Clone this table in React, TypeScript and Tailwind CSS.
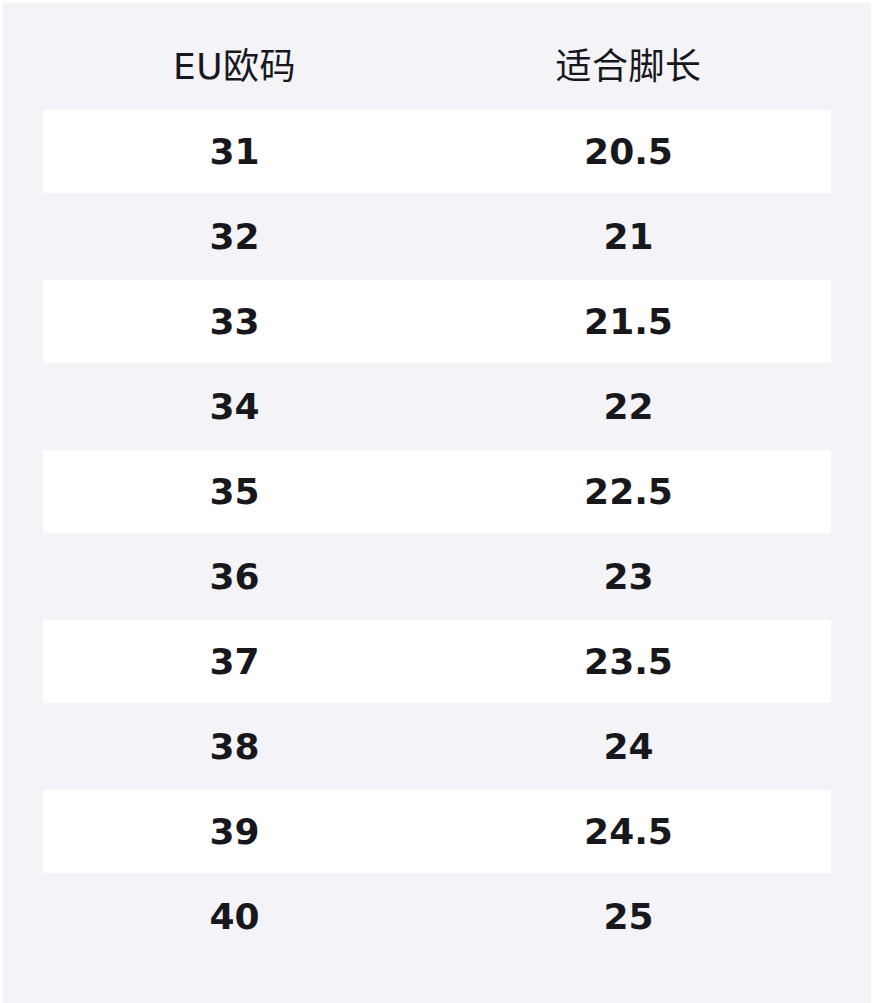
import React from "react";

const sizes: [string, string][] = [
  ["31", "20.5"],
  ["32", "21"],
  ["33", "21.5"],
  ["34", "22"],
  ["35", "22.5"],
  ["36", "23"],
  ["37", "23.5"],
  ["38", "24"],
  ["39", "24.5"],
  ["40", "25"],
];

const font = {
  fontFamily: '"DejaVu Sans", "Noto Sans CJK SC", sans-serif',
};

export default function App() {
  return (
    <div className="bg-white w-[874px] h-[1003px] pt-[3px] pl-[3px]" style={font}>
      <div className="w-[868px] h-[1000px] bg-[#f3f3f8] px-[40px] text-[#18181c]">
        {/* header */}
        <div className="grid grid-cols-2 pt-[40px] pb-[19px] text-[36px] leading-[48px] tracking-[0.5px]">
          <div className="text-center pr-[11px]">EU欧码</div>
          <div className="text-center pr-[11px]">适合脚长</div>
        </div>

        {/* rows */}
        <div className="flex flex-col gap-[2px]">
          {sizes.map(([eu, len], i) => (
            <div
              key={eu}
              className={`grid grid-cols-2 h-[83px] items-center text-[36px] font-bold ${
                i % 2 === 0 ? "bg-white" : ""
              }`}
            >
              <div className="text-center pr-[11px]">{eu}</div>
              <div className="text-center pr-[11px]">{len}</div>
            </div>
          ))}
        </div>
      </div>
    </div>
  );
}
